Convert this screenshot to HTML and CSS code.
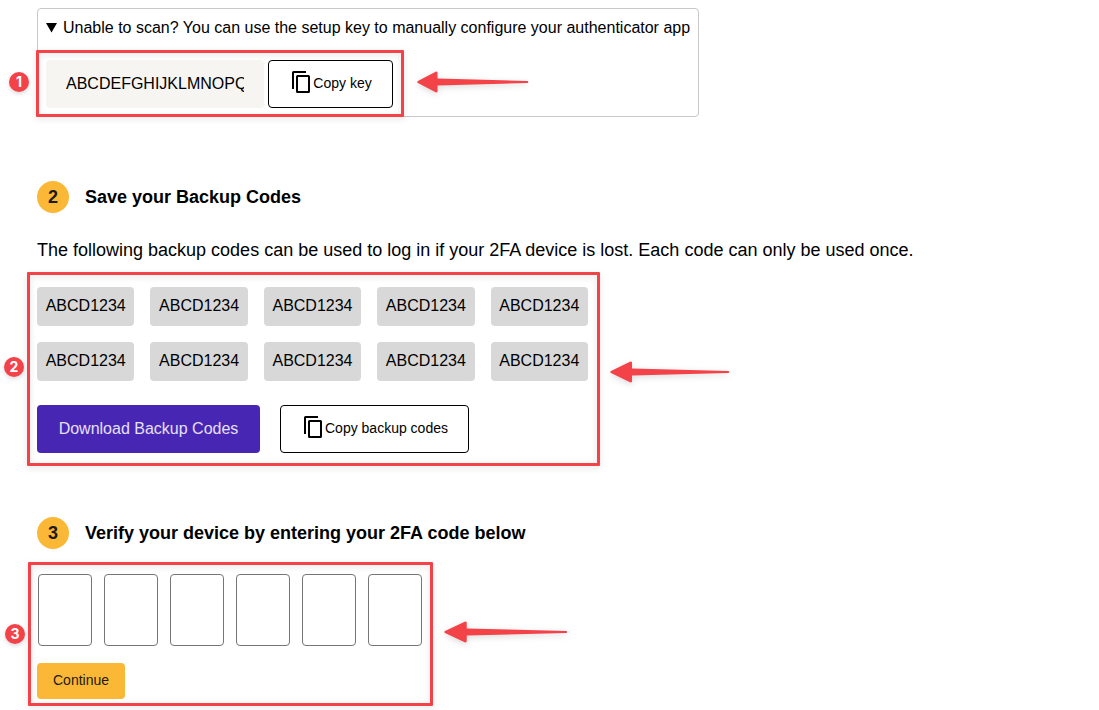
FILE: index.html
```
<!DOCTYPE html>
<html lang="en">
<head>
<meta charset="utf-8">
<meta name="viewport" content="width=device-width, initial-scale=1">
<title>Two-factor authentication setup</title>
<link rel="stylesheet" href="styles.css">
</head>
<body>
<svg class="defs" aria-hidden="true">
  <symbol id="copy" viewBox="0 0 24 24"><path d="M17 1H4.500Q3 1 3 2.500V19h2V3h12zM19.500 5h-11Q7 5 7 6.500v15Q7 23 8.500 23h11q1.500 0 1.500-1.500v-15Q21 5 19.500 5zM19 21H9V7h10z"/></symbol>
  <symbol id="arrow" viewBox="0 0 120 22" preserveAspectRatio="none"><path d="M1 10 L20 .7 Q22 0 22 2 V7.500 L118.500 10 Q120 11 118.500 12 L22 14.500 V20 Q22 22 20 21.300 L1 12 Q-.5 11 1 10Z"/></symbol>
</svg>
<main class="setup">
  <details class="manual" open>
    <summary class="manual-title"><svg class="marker" viewBox="0 0 11 10" aria-hidden="true"><path d="M0 0h11L5.500 9.500z"/></svg>Unable to scan? You can use the setup key to manually configure your authenticator app</summary>
    <div class="marked marked-key">
      <div class="key-row">
        <input class="key" type="text" aria-label="Setup key" value="ABCDEFGHIJKLMNOPQRSTUVWXYZ" readonly>
        <button class="btn btn-outline" type="button"><svg class="icon" aria-hidden="true"><use href="#copy"/></svg>Copy key</button>
      </div>
      <span class="frame"></span>
      <span class="badge">1</span>
      <svg class="arrow" aria-hidden="true"><use href="#arrow"/></svg>
    </div>
  </details>

  <section class="step">
    <h2 class="step-title"><span class="step-number">2</span>Save your Backup Codes</h2>
    <p class="step-text">The following backup codes can be used to log in if your 2FA device is lost. Each code can only be used once.</p>
    <div class="marked marked-codes">
      <ul class="codes">
        <li class="code">ABCD1234</li>
        <li class="code">ABCD1234</li>
        <li class="code">ABCD1234</li>
        <li class="code">ABCD1234</li>
        <li class="code">ABCD1234</li>
        <li class="code">ABCD1234</li>
        <li class="code">ABCD1234</li>
        <li class="code">ABCD1234</li>
        <li class="code">ABCD1234</li>
        <li class="code">ABCD1234</li>
      </ul>
      <div class="actions">
        <button class="btn btn-primary" type="button">Download Backup Codes</button>
        <button class="btn btn-outline" type="button"><svg class="icon" aria-hidden="true"><use href="#copy"/></svg>Copy backup codes</button>
      </div>
      <span class="frame"></span>
      <span class="badge">2</span>
      <svg class="arrow" aria-hidden="true"><use href="#arrow"/></svg>
    </div>
  </section>

  <section class="step">
    <h2 class="step-title"><span class="step-number">3</span>Verify your device by entering your 2FA code below</h2>
    <form class="marked marked-verify">
      <div class="digits">
        <input class="digit" type="text" inputmode="numeric" maxlength="1" aria-label="Digit 1">
        <input class="digit" type="text" inputmode="numeric" maxlength="1" aria-label="Digit 2">
        <input class="digit" type="text" inputmode="numeric" maxlength="1" aria-label="Digit 3">
        <input class="digit" type="text" inputmode="numeric" maxlength="1" aria-label="Digit 4">
        <input class="digit" type="text" inputmode="numeric" maxlength="1" aria-label="Digit 5">
        <input class="digit" type="text" inputmode="numeric" maxlength="1" aria-label="Digit 6">
      </div>
      <button class="btn btn-continue" type="button">Continue</button>
      <span class="frame"></span>
      <span class="badge">3</span>
      <svg class="arrow" aria-hidden="true"><use href="#arrow"/></svg>
    </form>
  </section>
</main>
</body>
</html>
```
FILE: styles.css
```
* {
  box-sizing: border-box;
}

body {
  margin: 0;
  background: #fff;
  color: #000;
  font: 16px/24px "Liberation Sans", Arial, sans-serif;
}

.defs {
  display: none;
}

.setup {
  display: flex;
  flex-direction: column;
  align-items: flex-start;
  gap: 64px;
  padding: 8px 37px 11px;
}

/* Manual setup key */
.manual {
  padding: 8px;
  border: 1px solid #c8c8c8;
  border-radius: 4px;
}

.manual-title {
  display: flex;
  align-items: center;
  gap: 6px;
  margin-bottom: 21px;
  line-height: 22px;
  cursor: pointer;
}

.marker {
  width: 11px;
  height: 10px;
}

.key-row {
  display: flex;
  gap: 4px;
}

.key {
  width: 218px;
  height: 48px;
  padding: 0 20px;
  border: 0;
  border-radius: 4px;
  background: #f6f5f2;
  color: #000;
  font: inherit;
}

/* Buttons */
.btn {
  display: flex;
  align-items: center;
  justify-content: center;
  height: 48px;
  padding: 0 20px 2px;
  border: 0;
  border-radius: 4px;
  color: #000;
  font: 14px/20px "Liberation Sans", Arial, sans-serif;
  white-space: nowrap;
  cursor: pointer;
}

.btn-outline {
  min-width: 125px;
  border: 1px solid #000;
  background: #fff;
}

.btn-primary {
  min-width: 223px;
  padding-bottom: 0;
  background: #4826b4;
  color: #e6e0f6;
  font-size: 16px;
}

.btn-continue {
  height: 36px;
  padding: 0 16px 2px;
  background: #fbb836;
  color: #1c1a14;
}

.icon {
  width: 24px;
  height: 24px;
  margin-bottom: 2px;
}

/* Steps */
.step-title {
  display: flex;
  align-items: center;
  gap: 16px;
  margin: 0 0 25px;
  font-size: 18px;
  line-height: 24px;
}

.step-number {
  display: grid;
  place-items: center;
  flex: none;
  width: 32px;
  height: 32px;
  border-radius: 50%;
  background: #fbb836;
  color: #1c1a14;
}

.step-text {
  margin: 0 0 25px;
  font-size: 18px;
}

.codes {
  display: grid;
  grid-template-columns: repeat(5, 1fr);
  gap: 16px;
  margin: 0 0 24px;
  padding: 0;
  list-style: none;
}

.code {
  padding: 9px 0 10px;
  border-radius: 4px;
  background: #d8d8d8;
  line-height: 20px;
  text-align: center;
}

.actions {
  display: flex;
  gap: 20px;
}

.digits {
  display: flex;
  gap: 12px;
  margin-bottom: 17px;
  padding: 0 1px;
}

.digit {
  width: 54px;
  height: 72px;
  padding: 0;
  border: 1px solid #767676;
  border-radius: 4px;
  font: inherit;
  font-size: 24px;
  text-align: center;
}

/* Callouts laid over the steps */
.marked {
  position: relative;
  width: fit-content;
}

.marked-codes {
  width: 551px;
}

.frame,
.badge,
.arrow {
  position: absolute;
  pointer-events: none;
}

.frame {
  border: 3px solid #f34248;
  border-radius: 1px;
  filter: drop-shadow(0 2px 3px rgb(0 0 0 / 12%));
}

.badge {
  display: grid;
  place-items: center;
  width: 20px;
  height: 20px;
  border-radius: 50%;
  background: #f34248;
  box-shadow: 0 2px 4px rgb(0 0 0 / 15%);
  color: #fff;
  font: bold 14px/20px Inter, "Liberation Sans", sans-serif;
}

.arrow {
  width: 120px;
  height: 22px;
  overflow: visible;
  fill: #f34248;
  filter: drop-shadow(0 2px 3px rgb(0 0 0 / 15%));
}

.marked-key .frame {
  inset: -10px -11px -9px -10px;
}

.marked-key .badge {
  top: 12px;
  left: -37px;
}

.marked-key .arrow {
  top: 11px;
  left: calc(100% + 24px);
  width: 112px;
}

.marked-codes .frame {
  inset: -15px -12px -13px -10px;
}

.marked-codes .badge {
  top: 70px;
  left: -33px;
}

.marked-codes .arrow {
  top: 74px;
  left: calc(100% + 22px);
}

.marked-verify .frame {
  inset: -12px -10px -7px -9px;
}

.marked-verify .badge {
  top: 50px;
  left: -32px;
}

.marked-verify .arrow {
  top: 47px;
  left: calc(100% + 21px);
  width: 124px;
}
```
